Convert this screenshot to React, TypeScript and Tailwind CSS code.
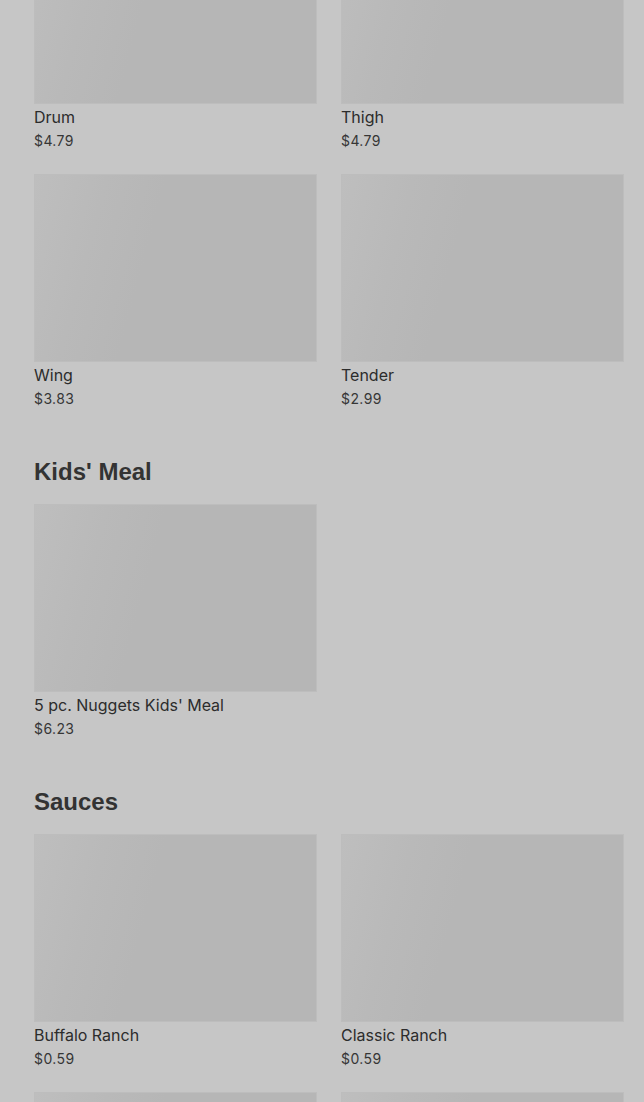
import React from "react";

type Item = { name: string; price: string };

const sections: { title?: string; items: Item[] }[] = [
  {
    items: [
      { name: "Drum", price: "$4.79" },
      { name: "Thigh", price: "$4.79" },
      { name: "Wing", price: "$3.83" },
      { name: "Tender", price: "$2.99" },
    ],
  },
  { title: "Kids' Meal", items: [{ name: "5 pc. Nuggets Kids' Meal", price: "$6.23" }] },
  {
    title: "Sauces",
    items: [
      { name: "Buffalo Ranch", price: "$0.59" },
      { name: "Classic Ranch", price: "$0.59" },
      { name: "Honey Mustard", price: "$0.59" },
      { name: "BBQ", price: "$0.59" },
    ],
  },
];

function Card({ item }: { item: Item }) {
  return (
    <div className="flex flex-col">
      <div className="h-[188px] w-full border border-[#bdbdbd] bg-[linear-gradient(105deg,#bebebe_0%,#b9b9b9_22%,#b6b6b6_40%,#b6b6b6_100%)]" />
      <div className="mt-[2px] text-[16px] leading-[22px] text-[#2c2c2c] font-['Inter',sans-serif]">
        {item.name}
      </div>
      <div className="mt-[3px] text-[14px] leading-[19px] tracking-[0.4px] text-[#363636] font-['Inter',sans-serif]">
        {item.price}
      </div>
    </div>
  );
}

export default function App() {
  return (
    <div className="min-h-[1102px] w-full overflow-hidden bg-[#c6c6c6]">
      <div className="mt-[-84px] pl-[34px] pr-[20px] pb-10">
        {sections.map((s, i) => (
          <div key={i}>
            {s.title && (
              <h2 className="mt-[48px] mb-[16px] text-[24px] leading-[32px] font-bold text-[#333333] font-['Liberation_Sans',Arial,sans-serif]">
                {s.title}
              </h2>
            )}
            <div className="grid grid-cols-2 gap-x-[24px] gap-y-[24px]">
              {s.items.map((it) => (
                <Card key={it.name} item={it} />
              ))}
            </div>
          </div>
        ))}
      </div>
    </div>
  );
}
